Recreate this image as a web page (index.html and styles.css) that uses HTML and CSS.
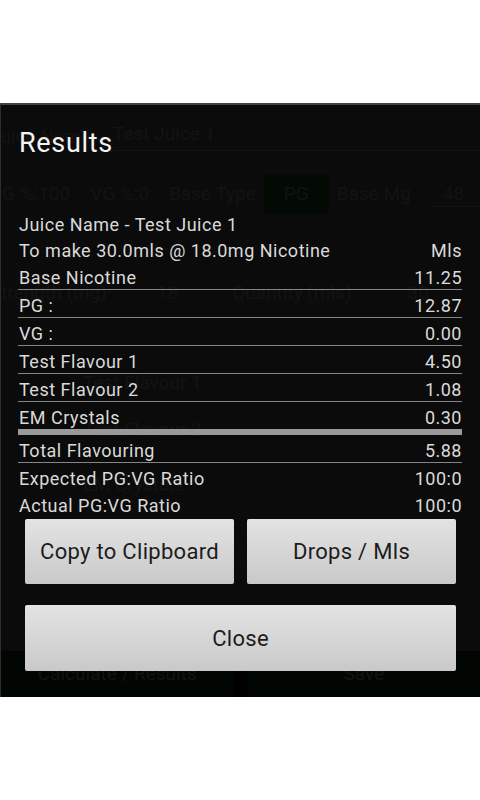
FILE: index.html
```html
<!DOCTYPE html>
<html lang="en">
  <head>
    <meta charset="UTF-8" />
    <meta name="viewport" content="width=device-width, initial-scale=1.0" />
    <title>Results</title>
    <link rel="stylesheet" href="styles.css">
  </head>
  <body>
    <div class="pantalla">
      <!-- La app que queda detras del dialogo, muy oscurecida -->
      <div class="app">
        <div class="fantasma fila-nombre">
          <span class="recortado">Juice Name</span>
          <span class="campo">Test Juice 1</span>
        </div>
        <div class="fantasma fila-base">
          <span class="recortado">PG %:100</span>
          <span>VG %:0</span>
          <span>Base Type</span>
          <span class="caja-verde">PG</span>
          <span>Base Mg</span>
          <span class="campo-corto">48</span>
        </div>
        <div class="fantasma fila-fuerza">
          <span class="recortado">Strength (mg)</span>
          <span>18</span>
          <span>Quantity (mls)</span>
          <span>30</span>
        </div>
        <div class="fantasma fila-sabor">Test Flavour 1</div>
        <div class="fantasma fila-sabor">Test Flavour 2</div>
        <div class="fantasma fila-sabor">EM Crystals</div>
        <div class="relleno"></div>
        <div class="fantasma botones-app">
          <span>Calculate / Results</span>
          <span>Save</span>
        </div>
      </div>

      <!-- Dialogo de resultados, va encima de la app -->
      <section class="dialogo">
        <header>Results</header>
        <div class="lista">
          <div class="fila justa"><span>Juice Name - Test Juice 1</span></div>
          <div class="fila justa"><span>To make 30.0mls @ 18.0mg Nicotine</span><span>Mls</span></div>
          <div class="fila linea"><span>Base Nicotine</span><span>11.25</span></div>
          <div class="fila linea"><span>PG :</span><span>12.87</span></div>
          <div class="fila linea"><span>VG :</span><span>0.00</span></div>
          <div class="fila linea"><span>Test Flavour 1</span><span>4.50</span></div>
          <div class="fila linea"><span>Test Flavour 2</span><span>1.08</span></div>
          <div class="fila gruesa"><span>EM Crystals</span><span>0.30</span></div>
          <div class="fila linea"><span>Total Flavouring</span><span>5.88</span></div>
          <div class="fila"><span>Expected PG:VG Ratio</span><span>100:0</span></div>
          <div class="fila"><span>Actual PG:VG Ratio</span><span>100:0</span></div>
        </div>
        <div class="botones">
          <button>Copy to Clipboard</button>
          <button>Drops / Mls</button>
        </div>
        <div class="botones">
          <button class="cerrar">Close</button>
        </div>
      </section>
    </div>
  </body>
</html>
```

FILE: styles.css
```css
body {
  margin: 0;
  background-color: white;
  font-family: Roboto, "Noto Sans", "Liberation Sans", sans-serif;
}

.pantalla {
  position: relative;
  width: 480px;
  height: 800px;
  padding-top: 103px;
  box-sizing: border-box;
  overflow: hidden;
}

/* La app de fondo: todo muy apagado */
.app {
  height: 594px;
  background-color: #0b0b0b;
  border-top: 2px solid #434343;
  border-left: 1px solid #2e2e2e;
  box-sizing: border-box;
  display: flex;
  flex-direction: column;
  overflow: hidden;
}
.fantasma {
  color: #131313;
  font-size: 19px;
  line-height: 24px;
  display: flex;
  align-items: center;
  white-space: nowrap;
}
.fantasma span {
  flex-shrink: 0;
}
.recortado {
  margin-left: -11px;
}
.fila-nombre {
  margin-top: 17px;
  gap: 22px;
}
.fila-nombre .campo {
  flex: 1;
  border-bottom: 1px solid #121212;
  padding-bottom: 4px;
}
.fila-base {
  margin-top: 24px;
  gap: 20px;
}
.caja-verde {
  background-color: #030a03;
  padding: 7px 20px;
  margin: 0 -12px;
}
.fantasma .campo-corto {
  flex: 1;
  padding-left: 12px;
  border-bottom: 1px solid #121212;
}
.fila-fuerza {
  margin-top: 68px;
}
.fila-fuerza span:nth-child(2) {
  margin-left: 50px;
}
.fila-fuerza span:nth-child(3) {
  margin-left: 54px;
}
.fila-fuerza span:nth-child(4) {
  margin-left: 56px;
}
.fila-sabor {
  margin-top: 23px;
  padding-left: 82px;
}
.fila-fuerza + .fila-sabor {
  margin-top: 66px;
}
.fila-sabor + .fila-sabor + .fila-sabor {
  margin-top: 31px;
}
.relleno {
  flex: 1;
}
.botones-app {
  height: 46px;
  gap: 14px;
  background-color: #000;
}
.fantasma.botones-app span {
  flex: 1;
  height: 100%;
  background-color: #020602;
  display: flex;
  align-items: center;
  justify-content: center;
}

/* El dialogo va por encima de la app */
.dialogo {
  position: absolute;
  top: 103px;
  left: 0;
  width: 480px;
  height: 594px;
  padding-top: 23px;
  box-sizing: border-box;
}
.dialogo header {
  color: #f4f4f4;
  font-size: 27px;
  line-height: 34px;
  letter-spacing: 0.7px;
  padding-left: 19px;
  margin-bottom: 50px;
}
.lista {
  margin: 0 18px 0 18px;
  color: #dadada;
  font-size: 18px;
  letter-spacing: 0.5px;
}
.fila {
  display: flex;
  justify-content: space-between;
  padding: 5px 0 0 1px;
  line-height: 22px;
}
.fila.justa {
  padding-top: 4px;
}
.fila.linea {
  border-bottom: 1px solid #858585;
}
.fila.gruesa {
  border-bottom: 6px solid #9a9a9a;
}

.botones {
  display: flex;
  gap: 13px;
  padding: 0 24px 0 25px;
  margin-top: 2px;
}
.botones + .botones {
  margin-top: 21px;
}
.botones button {
  flex: 1;
  height: 65px;
  border: none;
  border-radius: 2px;
  background: linear-gradient(#e3e3e3, #c9c9c9);
  color: #1c1c1c;
  font-family: Roboto, "Noto Sans", "Liberation Sans", sans-serif;
  font-size: 22px;
  letter-spacing: 0.3px;
  padding: 0;
}
.botones .cerrar {
  height: 66px;
}
```
